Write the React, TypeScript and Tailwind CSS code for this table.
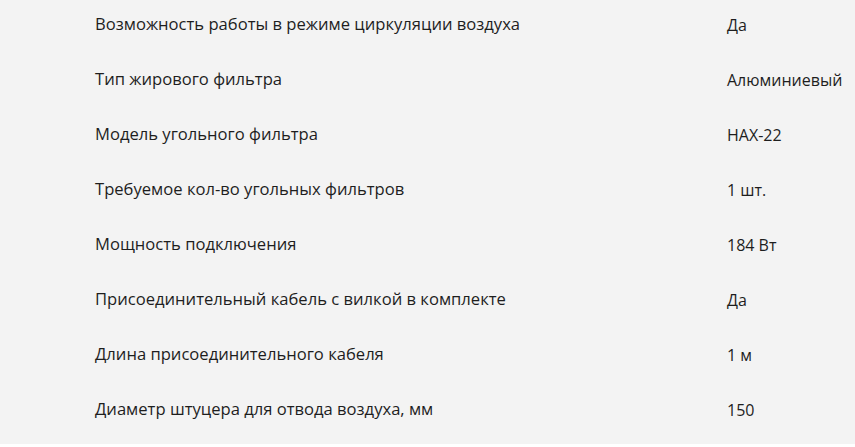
const specs: [string, string][] = [
  ["Возможность работы в режиме циркуляции воздуха", "Да"],
  ["Тип жирового фильтра", "Алюминиевый"],
  ["Модель угольного фильтра", "НАХ-22"],
  ["Требуемое кол-во угольных фильтров", "1 шт."],
  ["Мощность подключения", "184 Вт"],
  ["Присоединительный кабель с вилкой в комплекте", "Да"],
  ["Длина присоединительного кабеля", "1 м"],
  ["Диаметр штуцера для отвода воздуха, мм", "150"],
];

export default function App() {
  return (
    <div className="min-h-screen bg-[#f3f3f3] text-[#1e1e1e] font-['Open_Sans',sans-serif]">
      <dl className="-mt-[3px] pl-[95px]">
        {specs.map(([name, value]) => (
          <div key={name} className="grid grid-cols-[632px_1fr] h-[55px] items-center">
            <dt className="whitespace-nowrap text-[16.6px]">{name}</dt>
            <dd className="whitespace-nowrap text-[16px]">{value}</dd>
          </div>
        ))}
      </dl>
    </div>
  );
}
